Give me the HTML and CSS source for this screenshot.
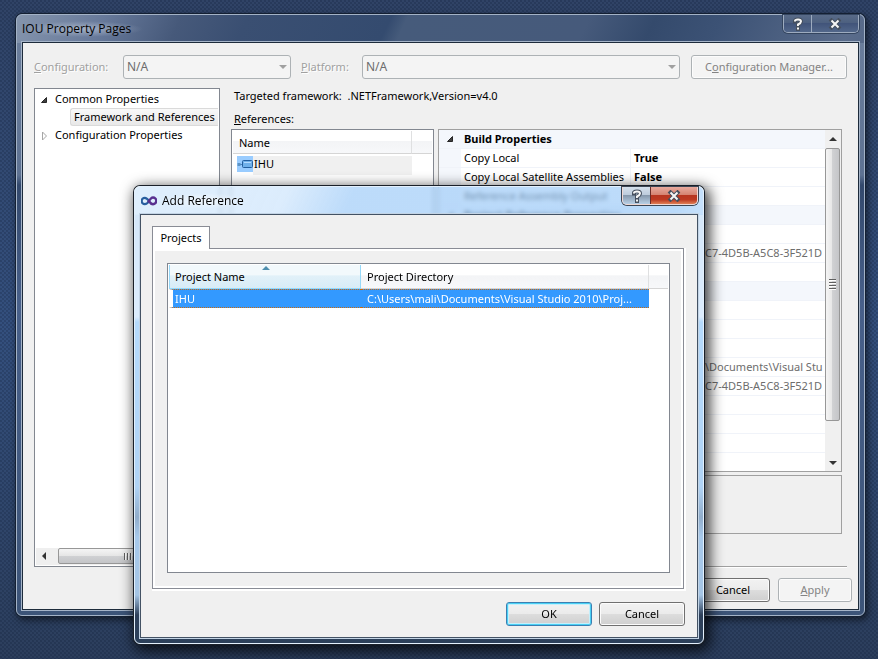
FILE: index.html
```html
<!DOCTYPE html>
<html lang="en">

	<head>
		<meta charset="utf-8" />
		<title>IOU Property Pages</title>
		<link rel="stylesheet" href="styles.css">
	</head>

	<body>
		<div class="window main">
			<div class="titlebar"><span class="title">IOU Property Pages</span></div>
			<div class="caption">
				<button type="button" class="help" aria-label="Help"><svg width="12" height="14" viewBox="0 0 12 14"><path class="edge" d="M3 4.5V4Q3 2.5 6 2.5T9 4.5Q9 6 6 7.5V9M6 10.5V12.5"/><path class="ink" d="M3 4.5V4Q3 2.5 6 2.5T9 4.5Q9 6 6 7.5V9M6 10.5V12.5"/></svg></button>
				<button type="button" class="close" aria-label="Close"><svg width="14" height="12" viewBox="0 0 14 12"><path class="edge" d="M3.5 2.5L10.5 9.5M10.5 2.5L3.5 9.5"/><path class="ink" d="M3.5 2.5L10.5 9.5M10.5 2.5L3.5 9.5"/></svg></button>
			</div>
			<div class="client">
				<div class="toprow">
					<label class="conf" for="conf"><u>C</u>onfiguration:</label>
					<span class="combo confbox"><select id="conf" disabled><option>N/A</option></select></span>
					<label class="plat" for="plat"><u>P</u>latform:</label>
					<span class="combo platbox"><select id="plat" disabled><option>N/A</option></select></span>
					<button type="button" class="btn manager" disabled><span>C<u>o</u>nfiguration Manager...</span></button>
				</div>
				<div class="middle">
					<div class="tree">
						<ul>
							<li><svg class="expander" width="9" height="9" viewBox="0 0 9 9"><path d="M6.5 2.5V7.5H1.5Z" fill="#404040" stroke="#262626"/></svg>Common Properties</li>
							<li class="child"><span>Framework and References</span></li>
							<li><svg class="expander" width="9" height="9" viewBox="0 0 9 9"><path d="M2.5 1V9L6.5 5Z" fill="#fff" stroke="#a6a6a6"/></svg>Configuration Properties</li>
						</ul>
						<div class="hscroll">
							<svg width="18" height="16" viewBox="0 0 18 16"><path d="M10 4V12L6 8Z" fill="#333"/></svg>
							<div class="hthumb"><i></i><i></i><i></i><i></i></div>
							<svg width="18" height="16" viewBox="0 0 18 16"><path d="M8 4V12L12 8Z" fill="#333"/></svg>
						</div>
					</div>
					<div class="right">
						<p class="framework">Targeted framework:&nbsp; .NETFramework,Version=v4.0</p>
						<p class="reflabel"><u>R</u>eferences:</p>
						<div class="panes">
							<div class="reflist">
								<table>
									<thead><tr><th>Name</th><th class="rest"></th></tr></thead>
									<tbody><tr><td><svg width="16" height="16" viewBox="0 0 16 16"><rect width="16" height="16" fill="#99ccff"/><path d="M2 8.5H5" stroke="#4b84bb" stroke-width="1"/><rect x="0.5" y="7" width="3" height="3" fill="#5b93c6"/><rect x="5.5" y="4.5" width="10" height="7" rx="1" fill="#6fb0ea" stroke="#245f9e"/><path d="M7 6.5H14" stroke="#b5dbff"/></svg><span>IHU</span></td><td></td></tr></tbody>
								</table>
							</div>
							<div class="rightpane">
								<div class="props">
									<table>
										<colgroup><col class="c1"><col class="c2"><col></colgroup>
										<tr class="cat"><td class="mark"><svg width="8" height="8" viewBox="0 0 8 8"><path d="M6.5 1.5V6.5H1.5Z" fill="#404040" stroke="#262626"/></svg></td><th colspan="2">Build Properties</th></tr>
										<tr><td class="mark"></td><td class="key">Copy Local</td><td class="bold">True</td></tr>
										<tr><td class="mark"></td><td class="key">Copy Local Satellite Assemblies</td><td class="bold">False</td></tr>
										<tr><td class="mark"></td><td class="key">Reference Assembly Output</td><td></td></tr>
										<tr class="cat"><td class="mark"><svg width="8" height="8" viewBox="0 0 8 8"><path d="M6.5 1.5V6.5H1.5Z" fill="#404040" stroke="#262626"/></svg></td><th colspan="2">Project Reference Properties</th></tr>
										<tr><td class="mark"></td><td></td><td></td></tr>
										<tr><td class="mark"></td><td></td><td class="tail">C7-4D5B-A5C8-3F521D</td></tr>
										<tr><td class="mark"></td><td></td><td></td></tr>
										<tr class="cat"><td class="mark"></td><th colspan="2"></th></tr>
										<tr><td class="mark"></td><td></td><td></td></tr>
										<tr><td class="mark"></td><td></td><td></td></tr>
										<tr><td class="mark"></td><td></td><td></td></tr>
										<tr><td class="mark"></td><td></td><td class="tail">\Documents\Visual Stu</td></tr>
										<tr><td class="mark"></td><td></td><td class="tail">C7-4D5B-A5C8-3F521D</td></tr>
										<tr><td class="mark"></td><td></td><td></td></tr>
										<tr><td class="mark"></td><td></td><td></td></tr>
										<tr><td class="mark"></td><td></td><td></td></tr>
									</table>
									<div class="vscroll">
										<svg width="16" height="18" viewBox="0 0 16 18"><path d="M4 11H12L8 7Z" fill="#333"/></svg>
										<div class="vthumb"><i></i><i></i><i></i><i></i></div>
										<svg width="16" height="18" viewBox="0 0 16 18"><path d="M4 8H12L8 12Z" fill="#333"/></svg>
									</div>
								</div>
								<div class="desc"></div>
							</div>
						</div>
						<hr>
					</div>
				</div>
				<div class="footer">
					<button type="button" class="btn">Cancel</button>
					<button type="button" class="btn" disabled><span><u>A</u>pply</span></button>
				</div>
			</div>
		</div>

		<div class="window dialog" role="dialog" aria-labelledby="dlgtitle">
			<div class="titlebar">
				<svg class="logo" width="16" height="10" viewBox="0 0 16 10"><path d="M8 5C6 2 5 1.8 3.8 1.8A3 3 0 0 0 3.8 8.2C5 8.2 6.5 7.5 8 5" fill="none" stroke="#285f9f" stroke-width="2.2"/><path d="M7 6.5C9 3 10 1.5 12 1.5A3.2 3.2 0 0 1 12 8.2C10.500 8.2 9.5 7.5 8.2 5.5" fill="none" stroke="#59308f" stroke-width="2.4"/></svg>
				<span class="title" id="dlgtitle">Add Reference</span>
			</div>
			<div class="caption">
				<button type="button" class="help" aria-label="Help"><svg width="12" height="14" viewBox="0 0 12 14"><path class="edge" d="M3 4.5V4Q3 2.5 6 2.5T9 4.5Q9 6 6 7.5V9M6 10.5V12.5"/><path class="ink" d="M3 4.5V4Q3 2.5 6 2.5T9 4.5Q9 6 6 7.5V9M6 10.5V12.5"/></svg></button>
				<button type="button" class="close" aria-label="Close"><svg width="14" height="12" viewBox="0 0 14 12"><path class="edge" d="M3.5 2.5L10.5 9.5M10.5 2.5L3.5 9.5"/><path class="ink" d="M3.5 2.5L10.5 9.5M10.5 2.5L3.5 9.5"/></svg></button>
			</div>
			<div class="client">
				<div class="tabs" role="tablist"><button type="button" class="tab" role="tab" aria-selected="true">Projects</button></div>
				<div class="tabpanel" role="tabpanel">
					<div class="projects">
						<table>
							<thead><tr><th class="sorted"><svg width="8" height="4" viewBox="0 0 8 4"><path d="M0 4H8L4 0Z" fill="#4f8fae"/></svg>Project Name</th><th>Project Directory</th><th class="rest"></th></tr></thead>
							<tbody><tr><td>IHU</td><td>C:\Users\mali\Documents\Visual Studio 2010\Proj...</td><td class="rest"></td></tr></tbody>
						</table>
					</div>
				</div>
				<div class="footer">
					<button type="button" class="btn default">OK</button>
					<button type="button" class="btn">Cancel</button>
				</div>
			</div>
		</div>
	</body>

</html>
```

FILE: styles.css
```css
*{margin: 0;padding: 0;box-sizing: border-box;}
html,body{height: 100%;}
body{
	position: relative;
	overflow: hidden;
	font: 11px/16px "Noto Sans","Open Sans",sans-serif;
	color: #000;
	background:
		radial-gradient(circle at 1px 1px,rgba(12,25,50,.22) 1px,transparent 1px) 0 0/4px 4px,
		radial-gradient(circle at 3px 3px,rgba(12,25,50,.22) 1px,transparent 1px) 0 0/4px 4px,
		linear-gradient(#304366,#34507e 50%,#2c3e5c);
}
button,select{font: inherit;color: inherit;}
ul{list-style: none;}
svg{display: block;}
table{border-collapse: separate;border-spacing: 0;}
th{font-weight: normal;text-align: left;}

/* windows */
.window{
	position: absolute;
	display: flex;
	flex-direction: column;
	padding: 0 5px 5px;
	border: 1px solid #a3b2c6;
	border-radius: 6px;
}
.main{
	top: 14px;
	right: 13px;
	bottom: 43px;
	left: 16px;
	background:
		linear-gradient(115deg,#8595ad 0,#67799a 80px,#46597a 150px,#3a4f72 210px,#344b6f 340px,#465b7b 355px,#465a7b 520px,#344a6c 580px,#3c5275 640px,#5a6c8b 760px,#42587a 880px) 0 0/100% 28px no-repeat,
		linear-gradient(#6c7f9d 0,#5e7292 160px,#33496d 170px,#48608a 290px,#3c5478 100%);
	box-shadow: 0 0 0 1px #142033,2px 3px 7px 1px rgba(0,0,0,.55);
}
.dialog{
	top: 186px;
	right: 174px;
	bottom: 15px;
	left: 134px;
	border-color: #e3f0fc;
	background:
		linear-gradient(115deg,rgba(214,234,252,.8) 0,rgba(208,230,252,.75) 140px,rgba(160,204,248,.7) 200px,rgba(160,204,248,.7) 500px,rgba(214,234,255,.8) 570px) 0 0/100% 28px no-repeat,
		linear-gradient(transparent 27px,#d5e7f9 28px,#dcecfd 130px,#b5dafc 135px,#b0d3f5 300px,#91adcb 330px,#a7c9eb 350px,#a5c5e5 408px,#2e405a 428px,#2c405a);
	backdrop-filter: blur(2px);
	box-shadow: 0 0 0 1px #1a2029,3px 4px 14px 3px rgba(0,0,0,.75);
}
.titlebar{
	display: flex;
	flex: none;
	align-items: center;
	height: 27px;
	font-size: 12px;
}
.main .title{
	padding: 0 12px 0 0;
	background: radial-gradient(closest-side,rgba(200,210,225,.6),transparent);
}
.dialog .titlebar{gap: 5px;padding-left: 1px;}
.dialog .title{
	padding: 0 6px 0 0;
	background: radial-gradient(closest-side,rgba(255,255,255,.6),transparent);
}
.title{font-family: "Open Sans","Noto Sans",sans-serif;}
.caption{
	position: absolute;
	top: 0;
	right: 5px;
	display: flex;
	height: 18px;
	border: 1px solid #9dabbf;
	border-top: 0;
	border-radius: 0 0 5px 5px;
	box-shadow: 0 0 0 1px #34455f;
	overflow: hidden;
}
.caption button{
	display: flex;
	align-items: center;
	justify-content: center;
	border: 0;
	background: linear-gradient(#596b88,#4c5f7f 50%,#41547a 50%,#52678a);
}
.caption .help{width: 28px;border-right: 1px solid #9dabbf;}
.caption .close{width: 46px;}
.caption path{fill: none;}
.edge{stroke: #46505f;stroke-width: 4;stroke-linecap: square;}
.ink{stroke: #f6f6f6;stroke-width: 2;}
.dialog .caption{border-color: #f0d8d4;box-shadow: 0 0 0 1px #3c4654;}
.dialog .caption .help{background: linear-gradient(#d5e0ec,#bccbdb 48%,#8799ad 50%,#b8cfe5);border-color: #6b2c27;}
.dialog .caption .close{background: linear-gradient(#e8aa9e,#d4816f 48%,#b73520 50%,#bd3a22 75%,#df7e55);}
.client{
	display: flex;
	flex: 1;
	flex-direction: column;
	min-height: 0;
	background: #f0f0f0;
	border: 1px solid #1d2b3b;
	outline: 1px solid #a5b4c8;
}
.main .client{padding: 12px 6px 7px 11px;}
.dialog .client{padding: 11px 12px 11px 11px;border-color: #435264;outline-color: #c3d4e5;}

/* buttons and drop-downs */
.btn{
	height: 24px;
	border: 1px solid #707070;
	border-radius: 3px;
	background: linear-gradient(#f2f2f2,#ebebeb 50%,#dddddd 50%,#cfcfcf);
	box-shadow: inset 0 0 0 1px #fcfcfc;
}
.btn:disabled{
	color: #838383;
	border-color: #adb2b5;
	background: #f4f4f4;
}
.default{
	border-color: #3c7fb1;
	box-shadow: inset 0 0 0 1px #48d0f5,inset 0 0 0 2px #c5effb;
}
.toprow{
	display: flex;
	flex: none;
	align-items: center;
	margin-right: 5px;
}
.toprow label{color: #a0a0a0;text-shadow: 1px 1px 0 #fff;}
.conf{width: 89px;}
.confbox{width: 168px;margin-right: 10px;}
.plat{width: 61px;}
.platbox{flex: 1;margin-right: 11px;}
.manager{width: 156px;}
.combo{position: relative;}
.combo select{
	display: block;
	width: 100%;
	height: 24px;
	padding: 0 3px;
	appearance: none;
	border: 1px solid #adb2b5;
	border-radius: 3px;
	background: #f4f4f4;
	color: #6d6d6d;
	font-size: 12px;
	opacity: 1;
}
.combo:after{
	content: "";
	position: absolute;
	top: 10px;
	right: 4px;
	border: 4px solid transparent;
	border-top-color: #a0a0a0;
	border-bottom: 0;
}

/* tree */
.middle{
	display: flex;
	flex: 1;
	gap: 11px;
	min-height: 0;
	margin: 9px 0 10px;
}
.tree{
	display: flex;
	flex: none;
	flex-direction: column;
	justify-content: space-between;
	width: 186px;
	margin-bottom: 1px;
	padding: 1px;
	border: 1px solid #828790;
	background: #fff;
}
.tree li{
	display: flex;
	align-items: center;
	height: 18px;
	padding-left: 4px;
	white-space: nowrap;
}
.expander{margin-right: 6px;}
.tree .child{padding-left: 34px;}
.child span{
	flex: 1;
	padding: 0 0 0 3px;
	line-height: 16px;
	border: 1px solid #dadada;
	border-right: 0;
	border-radius: 3px 0 0 3px;
	background: linear-gradient(#f9f9f9,#e8e8e8);
}
.hscroll{
	display: flex;
	height: 17px;
	background: #efefef;
}
.hthumb{
	display: flex;
	flex: 1;
	align-items: center;
	justify-content: center;
	gap: 1px;
	margin: 0 0 1px 4px;
	border: 1px solid #979797;
	border-radius: 2px;
	background: linear-gradient(#f5f5f5,#e6e6e6 48%,#d0d1d3 50%,#c4c5c8);
}
.hthumb i{width: 2px;height: 7px;background: #606060;border-right: 1px solid #fff;}

/* right side */
.right{
	display: flex;
	flex: 1;
	flex-direction: column;
	min-width: 0;
	padding-right: 5px;
}
.framework,.reflabel{padding-left: 3px;}
.reflabel{margin: 7px 0 2px;}
.panes{
	display: flex;
	flex: 1;
	gap: 4px;
	min-height: 0;
	margin: 0 5px 32px 0;
}
.reflist{
	flex: none;
	width: 203px;
	padding: 1px;
	border: 1px solid #828790;
	background: #fff;
}
.reflist table{width: 100%;}
.reflist th{
	width: 179px;
	height: 23px;
	padding: 1px 0 0 6px;
	border-right: 1px solid #dfe0e1;
	border-bottom: 1px solid #d5d5d5;
	background: linear-gradient(#fff 45%,#f3f4f6 46%,#f7f8fa);
}
.reflist .rest{width: auto;border-right: 0;}
.reflist td:first-child{
	display: flex;
	height: 21px;
	padding: 2px 0 0 4px;
}
.reflist td span{flex: 1;height: 19px;padding-left: 1px;background: #f0f0f0;}
.rightpane{
	display: flex;
	flex: 1;
	flex-direction: column;
	gap: 3px;
	min-width: 0;
}
.props{
	display: flex;
	flex: 1;
	min-height: 0;
	border: 1px solid #a0a0a0;
	background: #fff;
	overflow: hidden;
}
.props table{flex: 1;width: 100%;height: 323px;min-width: 0;table-layout: fixed;}
.c1{width: 22px;}
.c2{width: 170px;}
.props td,.props th{
	height: 19px;
	padding: 0 0 0 3px;
	line-height: 18px;
	white-space: nowrap;
	border-bottom: 1px solid #f0f3f9;
}
.props .key{border-right: 1px solid #f0f3f9;}
.props .cat td,.props .cat th{background: #f4f7fc;font-weight: bold;}
.props .mark{padding: 0 0 0 7px;background: #f4f7fc;}
.props .bold{font-weight: bold;}
.props .tail{padding-left: 74px;color: #6d6d6d;}
.vscroll{
	display: flex;
	flex: none;
	flex-direction: column;
	width: 16px;
	background: #f0f0f0;
}
.vthumb{
	display: flex;
	flex: 1;
	flex-direction: column;
	align-items: center;
	justify-content: center;
	gap: 1px;
	margin: 0 1px 32px 0;
	border: 1px solid #979797;
	border-radius: 2px;
	background: linear-gradient(90deg,#f5f5f5,#e6e6e6 48%,#d0d1d3 50%,#c4c5c8);
}
.vthumb i{width: 7px;height: 2px;background: #606060;border-bottom: 1px solid #fff;}
.desc{flex: none;height: 59px;border: 1px solid #a0a0a0;}
hr{
	border: 0;
	border-top: 1px solid #a0a0a0;
	border-bottom: 1px solid #fff;
}
.footer{
	display: flex;
	flex: none;
	justify-content: flex-end;
	gap: 8px;
}
.main .footer .btn{width: 74px;}

/* add reference dialog */
.tabs{display: flex;flex: none;}
.tab{
	position: relative;
	width: 58px;
	height: 23px;
	margin-bottom: -1px;
	border: 1px solid #898c95;
	border-bottom: 0;
	background: #fff;
}
.tabpanel{
	display: flex;
	flex: 1;
	min-height: 0;
	padding: 12px;
	margin: 0 1px 13px 0;
	border: 1px solid #898c95;
	box-shadow: inset 0 0 0 2px #fff,1px 1px 0 1px #fff;
}
.projects{
	flex: 1;
	margin: 2px 1px 3px 2px;
	padding: 1px;
	border: 1px solid #828790;
	background: #fff;
}
.projects table{width: 100%;table-layout: fixed;}
.projects th{
	height: 24px;
	padding: 1px 0 0 6px;
	border-right: 1px solid #dfe0e1;
	border-bottom: 1px solid #d5d5d5;
	background: linear-gradient(#fff 45%,#f3f4f6 46%,#f7f8fa);
}
.projects .sorted{
	position: relative;
	width: 192px;
	padding-left: 5px;
	border: 1px solid #96d9f9;
	border-top: 0;
	background: linear-gradient(#f2f9fc 45%,#e1f1f9 46%,#d8ecf6);
}
.sorted svg{position: absolute;top: 1px;left: 92px;}
.projects .rest{width: 19px;border-right: 0;}
.projects tbody{color: #fff;}
.projects td{
	height: 19px;
	padding: 0 0 0 6px;
	line-height: 17px;
	white-space: nowrap;
	border: 1px dotted #c86a10;
	border-width: 1px 0;
	background: #3399ff;
}
.projects td:first-child{border-left: 4px solid #fff;padding-left: 2px;}
.projects td.rest{border: 0;background: #fff;}
.dialog .footer{gap: 7px;}
.dialog .footer .btn{width: 86px;}
```
